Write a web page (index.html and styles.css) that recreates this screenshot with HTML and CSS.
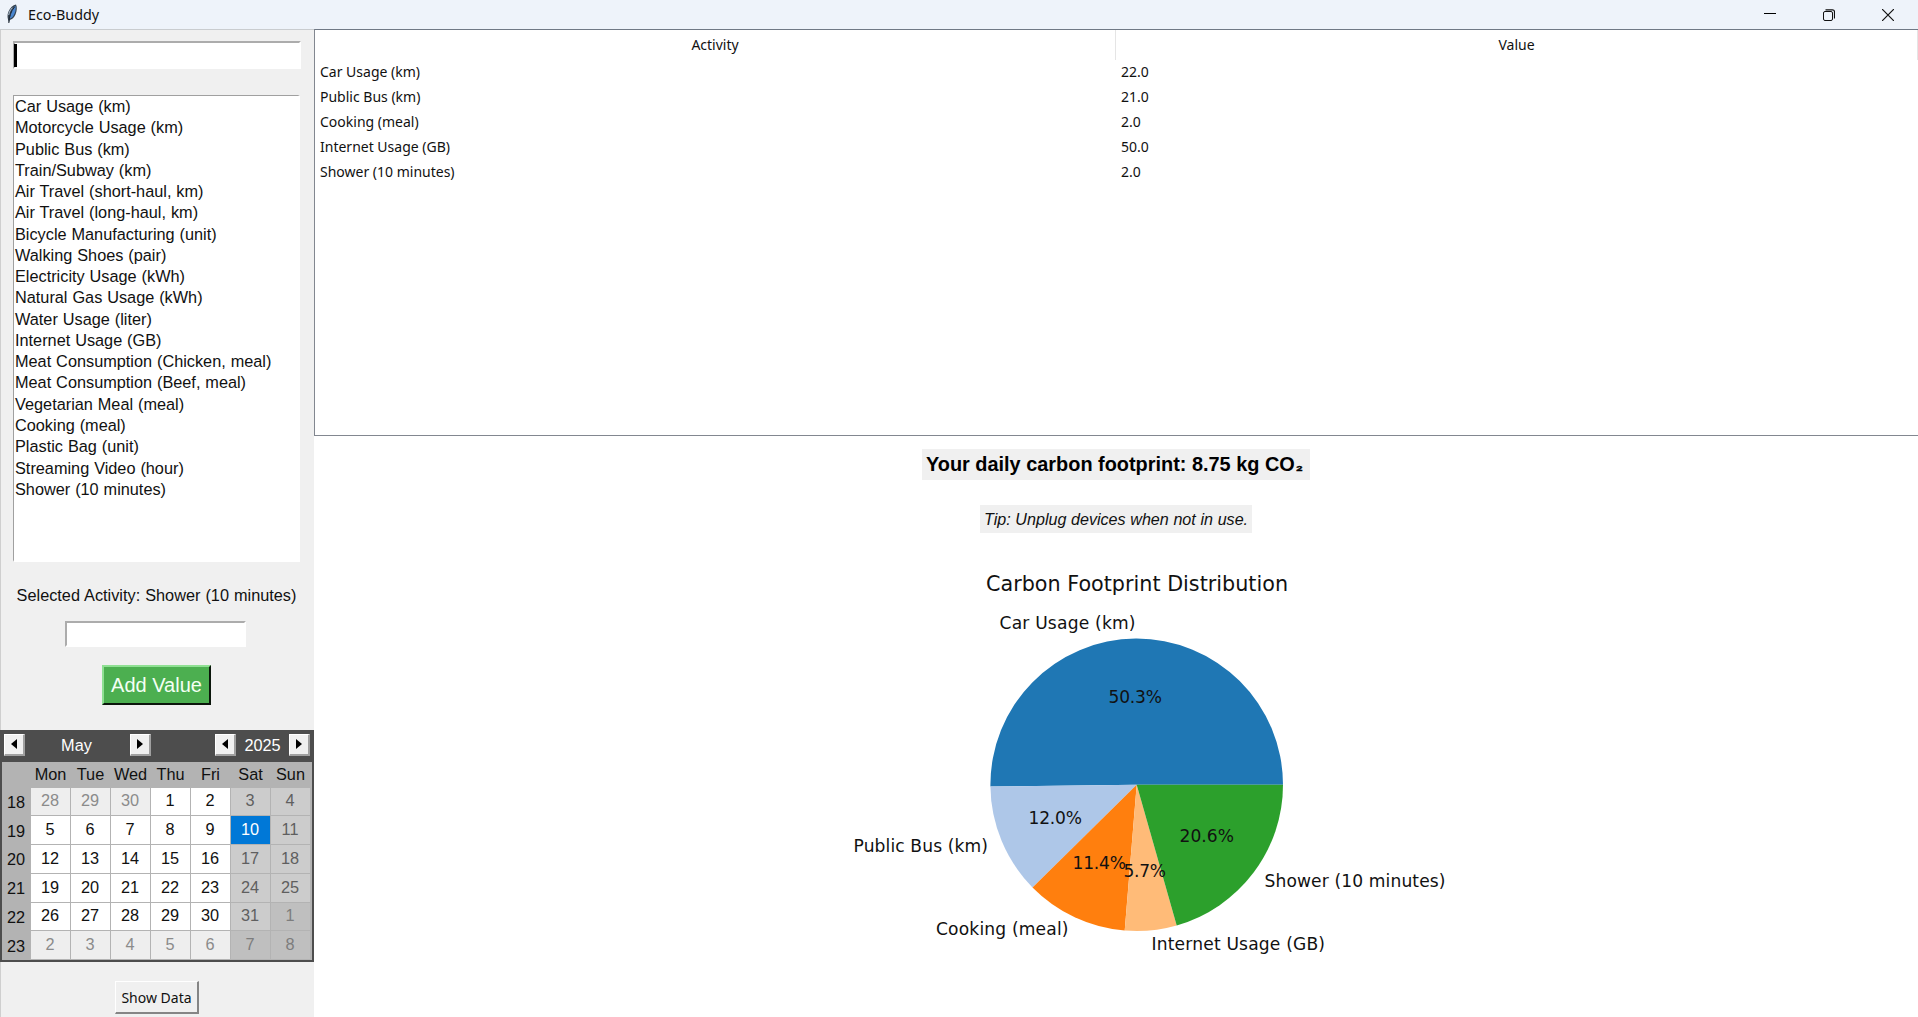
FILE: index.html
```html
<!DOCTYPE html>
<html lang="en">
<head>
<meta charset="utf-8">
<title>Eco-Buddy</title>
<link rel="stylesheet" href="styles.css">
</head>
<body>
<header class="titlebar">
  <svg class="feather" width="12" height="20" viewBox="0 0 12 20">
    <path d="M3 18.500C1.500 15 .8 11 2.500 7.500 4 4 7 1.200 10 .6 11.300 3 11 7 9.500 10.500 8.300 13.500 6 15.500 3.800 16z" fill="#35424f"/>
    <path d="M4 13C4.500 8.500 6.500 4 9.500 1.800 10.300 5 9.300 9 7.300 12 6.300 13.500 5 14.300 4 14.500z" fill="#4a86cf"/>
    <path d="M2.800 19C3 13 5 7 8.500 3" fill="none" stroke="#1b2430" stroke-width="1"/>
    <path d="M2.700 11C3.200 8 4.500 5.500 6.500 3.700" fill="none" stroke="#b7c6d6" stroke-width="1"/>
  </svg>
  <span class="app-name">Eco-Buddy</span>
  <div class="window-buttons">
    <svg width="12" height="12" viewBox="0 0 12 12"><path d="M0 4.500H12" stroke="#000"/></svg>
    <svg width="12" height="12" viewBox="0 0 12 12" fill="none" stroke="#111"><rect x=".5" y="2.500" width="9" height="9" rx="1.500"/><path d="M2.500 .8H9.500Q11.500 .8 11.500 2.800V9.500" stroke-width="1.200"/></svg>
    <svg width="12" height="12" viewBox="0 0 12 12"><path d="M0 0L12 12M12 0L0 12" stroke="#111" stroke-width="1.200"/></svg>
  </div>
</header>
<div class="window">
  <aside class="sidebar">
    <div class="entry search"><span class="caret"></span></div>
    <ul class="listbox">
      <li>Car Usage (km)</li>
      <li>Motorcycle Usage (km)</li>
      <li>Public Bus (km)</li>
      <li>Train/Subway (km)</li>
      <li>Air Travel (short-haul, km)</li>
      <li>Air Travel (long-haul, km)</li>
      <li>Bicycle Manufacturing (unit)</li>
      <li>Walking Shoes (pair)</li>
      <li>Electricity Usage (kWh)</li>
      <li>Natural Gas Usage (kWh)</li>
      <li>Water Usage (liter)</li>
      <li>Internet Usage (GB)</li>
      <li>Meat Consumption (Chicken, meal)</li>
      <li>Meat Consumption (Beef, meal)</li>
      <li>Vegetarian Meal (meal)</li>
      <li>Cooking (meal)</li>
      <li>Plastic Bag (unit)</li>
      <li>Streaming Video (hour)</li>
      <li>Shower (10 minutes)</li>
    </ul>
    <div class="selected">Selected Activity: Shower (10 minutes)</div>
    <div class="entry amount"></div>
    <button class="add">Add Value</button>
    <section class="calendar">
      <div class="cal-nav">
        <button class="arrow"><svg width="6" height="10" viewBox="0 0 6 10"><path d="M6 0V10L0 5z"/></svg></button>
        <span class="month">May</span>
        <button class="arrow"><svg width="6" height="10" viewBox="0 0 6 10"><path d="M0 0V10L6 5z"/></svg></button>
        <span class="spacer"></span>
        <button class="arrow"><svg width="6" height="10" viewBox="0 0 6 10"><path d="M6 0V10L0 5z"/></svg></button>
        <span class="year">2025</span>
        <button class="arrow"><svg width="6" height="10" viewBox="0 0 6 10"><path d="M0 0V10L6 5z"/></svg></button>
      </div>
      <div class="cal-grid">
        <span></span><span>Mon</span><span>Tue</span><span>Wed</span><span>Thu</span><span>Fri</span><span>Sat</span><span>Sun</span>
        <span class="wk">18</span><b class="o">28</b><b class="o">29</b><b class="o">30</b><b>1</b><b>2</b><b class="we">3</b><b class="we">4</b>
        <span class="wk">19</span><b>5</b><b>6</b><b>7</b><b>8</b><b>9</b><b class="sel">10</b><b class="we">11</b>
        <span class="wk">20</span><b>12</b><b>13</b><b>14</b><b>15</b><b>16</b><b class="we">17</b><b class="we">18</b>
        <span class="wk">21</span><b>19</b><b>20</b><b>21</b><b>22</b><b>23</b><b class="we">24</b><b class="we">25</b>
        <span class="wk">22</span><b>26</b><b>27</b><b>28</b><b>29</b><b>30</b><b class="we">31</b><b class="owe">1</b>
        <span class="wk">23</span><b class="o">2</b><b class="o">3</b><b class="o">4</b><b class="o">5</b><b class="o">6</b><b class="owe">7</b><b class="owe">8</b>
      </div>
    </section>
    <button class="show">Show Data</button>
  </aside>
  <main class="content">
    <div class="tree">
      <div class="tree-row tree-head"><span>Activity</span><span>Value</span></div>
      <div class="tree-row"><span>Car Usage (km)</span><span>22.0</span></div>
      <div class="tree-row"><span>Public Bus (km)</span><span>21.0</span></div>
      <div class="tree-row"><span>Cooking (meal)</span><span>2.0</span></div>
      <div class="tree-row"><span>Internet Usage (GB)</span><span>50.0</span></div>
      <div class="tree-row"><span>Shower (10 minutes)</span><span>2.0</span></div>
    </div>
    <div class="footprint">Your daily carbon footprint: 8.75 kg CO<span class="sub">₂</span></div>
    <div class="tip">Tip: Unplug devices when not in use.</div>
    <svg class="chart" width="640" height="410" viewBox="840 560 640 410">
      <g transform="translate(1136.700 784.700)">
        <path d="M0 0H146.300A146.300 146.300 0 1 0 -146.290 1.900Z" fill="#1f77b4"/>
        <path d="M0 0L-146.290 1.900A146.300 146.300 0 0 0 -104.200 102.700Z" fill="#aec7e8"/>
        <path d="M0 0L-104.200 102.700A146.300 146.300 0 0 0 -12 145.800Z" fill="#ff7f0e"/>
        <path d="M0 0L-12 145.800A146.300 146.300 0 0 0 40 140.700Z" fill="#ffbb78"/>
        <path d="M0 0L40 140.700A146.300 146.300 0 0 0 146.300 0Z" fill="#2ca02c"/>
      </g>
      <text class="chart-title" x="986" y="591" textLength="302">Carbon Footprint Distribution</text>
      <text x="999.500" y="628.500" textLength="136">Car Usage (km)</text>
      <text x="853.500" y="852" textLength="134.500">Public Bus (km)</text>
      <text x="936" y="934.500" textLength="132.500">Cooking (meal)</text>
      <text x="1151.500" y="949.500" textLength="173.500">Internet Usage (GB)</text>
      <text x="1264.500" y="887" textLength="181">Shower (10 minutes)</text>
      <text x="1108.500" y="702.500" textLength="53.500">50.3%</text>
      <text x="1028.500" y="823.500" textLength="53.500">12.0%</text>
      <text x="1072.500" y="868.500" textLength="53.500">11.4%</text>
      <text x="1123.500" y="877" textLength="42.500">5.7%</text>
      <text x="1179.500" y="842" textLength="54.500">20.6%</text>
    </svg>
  </main>
</div>
</body>
</html>
```
FILE: styles.css
```css
* { box-sizing: border-box; }
body {
  margin: 0;
  width: 1918px;
  height: 1017px;
  overflow: hidden;
  display: flex;
  flex-direction: column;
  background: #fff;
  color: #111;
  font-family: "Liberation Sans", Arial, sans-serif;
  font-size: 16.3px;
}
button { font: inherit; color: inherit; padding: 0; border-radius: 0; }

.titlebar {
  height: 29px;
  flex: none;
  display: flex;
  align-items: center;
  padding: 0 24px 0 6px;
  background: #eef3fa;
  font: 15px "Noto Sans", "Open Sans", sans-serif;
}
.feather { margin-top: -2px; }
.app-name { margin-left: 10px; font-size: 14.300px; }
.window-buttons { margin-left: auto; display: flex; gap: 47px; }

.window { flex: 1; display: flex; min-height: 0; }
.sidebar {
  width: 314px;
  display: flex;
  flex-direction: column;
  align-items: center;
  background: #f0f0f0;
  border-top: 1px solid #c9cccf;
  box-shadow: inset 1px 0 #cfcfcf;
}
.entry {
  background: #fff;
  border: 2px solid;
  border-color: #acacac #fff #fff #acacac;
}
.search { width: 288px; height: 28px; margin: 11px 1px 0 0; }
.caret { display: block; width: 3px; height: 23px; margin: 1px 0 0 -1px; background: #000; }
.listbox {
  list-style: none;
  width: 287px;
  height: 467px;
  margin: 26px 1px 0 0;
  padding: 0 0 0 1px;
  background: #fff;
  border: solid;
  border-width: 1px 2px 2px 1px;
  border-color: #a0a0a0 #fff #fff #a0a0a0;
}
.listbox li { height: 21.270px; line-height: 21.270px; white-space: pre; word-spacing: .4px; }
.selected { height: 20px; line-height: 20px; margin: 23px 1px 0 0; white-space: pre; word-spacing: .5px; }
.amount { width: 181px; height: 26px; margin: 16px 3px 0 0; }
.add {
  width: 109px;
  height: 40px;
  margin: 18px 1px 0 0;
  flex: none;
  background: #4caf50;
  color: #f4fff4;
  font-size: 20px;
  border: solid;
  border-width: 2px;
  border-color: #8fe093 #0b160b #0b160b #8fe093;
}
.calendar {
  width: 314px;
  height: 232px;
  flex: none;
  margin-top: 25px;
  padding: 0 2px 2px;
  background: #4d4d4d;
}
.cal-nav {
  height: 32px;
  display: flex;
  align-items: center;
  padding: 0 2px 3px 2px;
  color: #fff;
  line-height: 20px;
}
.arrow {
  width: 21px;
  height: 22px;
  flex: none;
  display: flex;
  align-items: center;
  justify-content: center;
  background: #f0f0f0;
  border: solid;
  border-width: 1px 2px 2px 1px;
  border-color: #fff #a0a0a0 #a0a0a0 #fff;
}
.month { width: 105px; padding-right: 2px; text-align: center; }
.year { width: 53px; text-align: center; }
.spacer { flex: 1; }
.cal-grid {
  height: 198px;
  display: grid;
  grid-template-columns: 28px repeat(7, 39px);
  grid-template-rows: 24.500px repeat(6, 1fr);
  gap: 1px;
  padding: 0 1px 1px 0;
  background: #b3b3b3;
}
.cal-grid > * {
  display: flex;
  align-items: center;
  justify-content: center;
  font-weight: normal;
}
.cal-grid span { padding: 1px 0 0; }
.cal-grid span.wk { padding: 2px 0 0; }
.cal-grid b { background: #fff; padding: 0 1px 1px 0; }
.cal-grid .o { background: #eee; color: #8b8b8b; }
.cal-grid .we { background: #ccc; color: #5f5f5f; }
.cal-grid .owe { background: #bfbfbf; color: #7d7d7d; }
.cal-grid .sel { background: #0078d7; color: #fff; }
.show {
  width: 84px;
  height: 33px;
  flex: none;
  margin-top: 19px;
  font: 14px "Noto Sans", "Open Sans", sans-serif;
  background: #f0f0f0;
  border: solid;
  border-width: 1px 2px 2px 1px;
  border-color: #fff #858585 #858585 #fff;
}

.content {
  flex: 1;
  display: flex;
  flex-direction: column;
  align-items: center;
}
.tree {
  width: 100%;
  height: 407px;
  flex: none;
  border: 1px solid #828790;
  border-top-color: #6f7885;
  border-right: 0;
  font: 14px "Noto Sans", "Open Sans", sans-serif;
}
.tree-row {
  display: grid;
  grid-template-columns: 801px 802px;
  height: 25px;
  line-height: 23px;
}
.tree-row span { padding-left: 5px; }
.tree-head { height: 30px; line-height: 29px; text-align: center; }
.tree-head span { padding: 0; border-right: 1px solid #e5e5e5; }
.footprint {
  width: 388px;
  height: 31px;
  line-height: 31px;
  margin-top: 13px;
  padding-left: 4px;
  background: #f0f0f0;
  color: #000;
  font-weight: bold;
  font-size: 19.900px;
  white-space: pre;
}
.sub { font-size: 16px; margin-left: 1px; -webkit-text-stroke: .5px #000; }
.tip {
  width: 272px;
  height: 28px;
  line-height: 28px;
  margin-top: 25px;
  padding-left: 4px;
  background: #f0f0f0;
  font-style: italic;
  font-size: 16.100px;
  word-spacing: .2px;
  white-space: pre;
}
.chart {
  margin: 27px 0 0 88px;
  flex: none;
  font-family: "DejaVu Sans", sans-serif;
  font-size: 17.100px;
  fill: #111;
}
.chart-title { font-size: 20.700px; }
```
